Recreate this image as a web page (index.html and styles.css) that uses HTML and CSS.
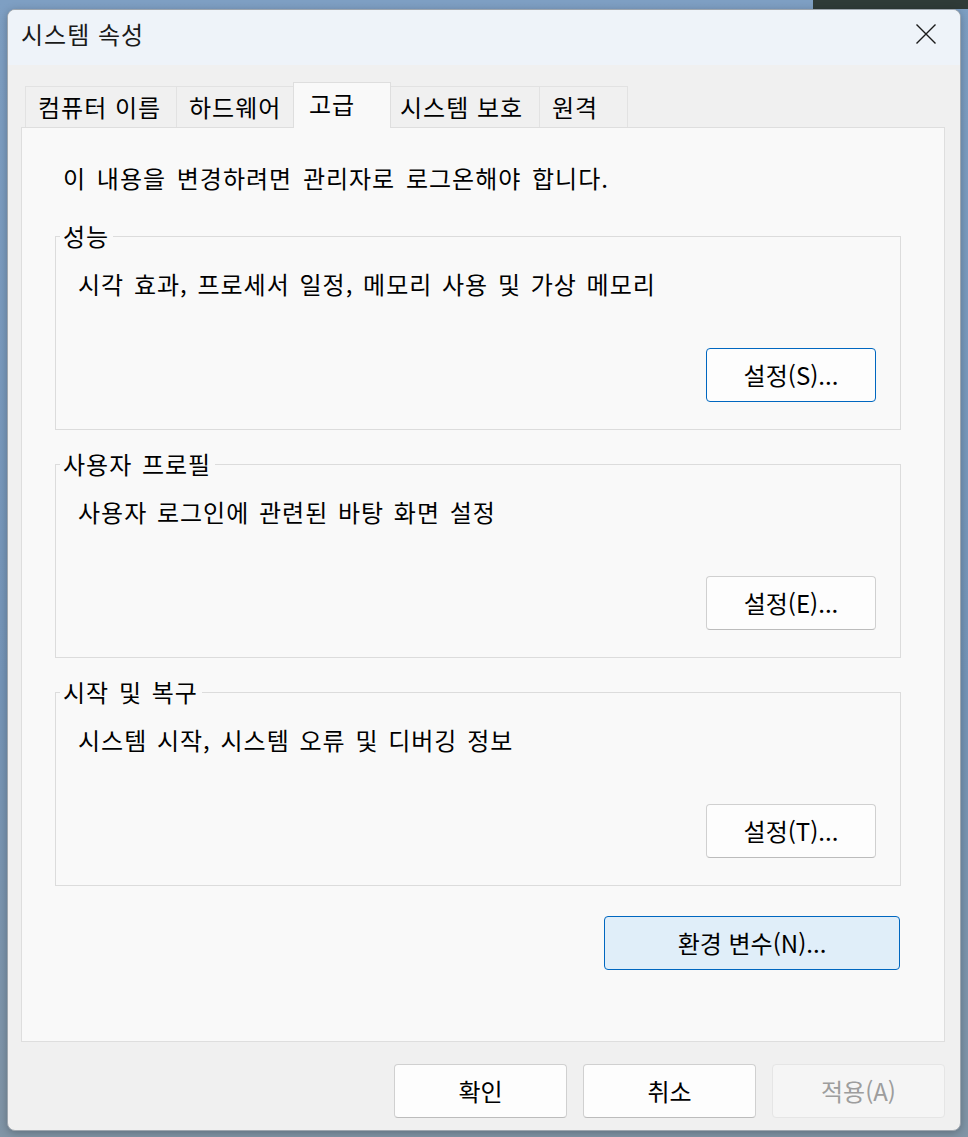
FILE: index.html
```html
<!DOCTYPE html>
<html lang="ko">
<head>
<meta charset="utf-8">
<title>시스템 속성</title>
<link rel="stylesheet" href="styles.css">
</head>
<body>
<div class="desktop">
  <div class="window">
    <div class="titlebar">
      <span class="title">시스템 속성</span>
      <button class="close" aria-label="닫기">
        <svg width="20" height="20" viewBox="0 0 20 20"><path d="M0.5 0.5 L19.5 19.5 M19.5 0.5 L0.5 19.5" stroke="#1a1a1a" stroke-width="1.4" fill="none"/></svg>
      </button>
    </div>
    <div class="content">
      <div class="tabs">
        <div class="tab tab-name">컴퓨터 이름</div>
        <div class="tab tab-hw">하드웨어</div>
        <div class="tab tab-adv is-selected">고급</div>
        <div class="tab tab-prot">시스템 보호</div>
        <div class="tab tab-remote">원격</div>
      </div>
      <div class="panel">
        <p class="intro">이 내용을 변경하려면 관리자로 로그온해야 합니다.</p>
        <fieldset class="group">
          <legend>성능</legend>
          <p class="desc">시각 효과, 프로세서 일정, 메모리 사용 및 가상 메모리</p>
          <div class="group-actions"><button class="btn btn-focus">설정(S)...</button></div>
        </fieldset>
        <fieldset class="group">
          <legend>사용자 프로필</legend>
          <p class="desc">사용자 로그인에 관련된 바탕 화면 설정</p>
          <div class="group-actions"><button class="btn">설정(E)...</button></div>
        </fieldset>
        <fieldset class="group">
          <legend>시작 및 복구</legend>
          <p class="desc">시스템 시작, 시스템 오류 및 디버깅 정보</p>
          <div class="group-actions"><button class="btn">설정(T)...</button></div>
        </fieldset>
        <div class="env-row"><button class="btn btn-default btn-wide">환경 변수(N)...</button></div>
      </div>
      <div class="footer">
        <button class="btn btn-foot">확인</button>
        <button class="btn btn-foot">취소</button>
        <button class="btn btn-foot btn-disabled">적용(A)</button>
      </div>
    </div>
  </div>
</div>
</body>
</html>
```

FILE: styles.css
```css
* { box-sizing: border-box; }

html, body {
  margin: 0;
  padding: 0;
}

body {
  width: 968px;
  height: 1137px;
  overflow: hidden;
  font-family: "Noto Sans CJK KR", "Noto Sans", sans-serif;
  font-size: 24px;
  letter-spacing: 1px;
  color: #000;
  background:
    linear-gradient(90deg, transparent 84%, #2f3b38 84%) top left / 100% 9px no-repeat,
    linear-gradient(180deg, #7e9fc3 0%, #7595b8 60%, #8195a6 100%);
}

.desktop {
  padding: 9px 0 0 7px;
}

.window {
  width: 954px;
  height: 1122px;
  border: 1px solid #9ea6ae;
  border-radius: 8px;
  background: #f0f0f0;
  overflow: hidden;
  display: flex;
  flex-direction: column;
  box-shadow: 0 2px 8px rgba(0, 0, 0, 0.25);
}

.titlebar {
  height: 55px;
  flex: none;
  background: #eef3f9;
  display: flex;
  align-items: center;
  justify-content: space-between;
  padding: 0 0 7px 13px;
}

.title {
  font-size: 24px;
  line-height: 32px;
  color: #1a1a1a;
}

.close {
  width: 66px;
  height: 40px;
  border: 0;
  background: transparent;
  padding: 0;
  display: flex;
  align-items: center;
  justify-content: center;
  margin-right: 1px;
}

.content {
  flex: 1;
  display: flex;
  flex-direction: column;
  padding: 17px 15px 12px 13px;
}

.tabs {
  display: flex;
  align-items: flex-end;
  height: 45px;
  padding-left: 4px;
  flex: none;
}

.tab {
  height: 41px;
  border: 1px solid #e2e2e2;
  border-bottom: 0;
  background: #f0f0f0;
  margin-left: -1px;
  padding-left: 12px;
  line-height: 40px;
  white-space: nowrap;
}

.tab:first-child { margin-left: 0; }

.tab-name { width: 152px; }
.tab-hw { width: 118px; }
.tab-adv { width: 98px; }
.tab-prot { width: 150px; padding-left: 9px; }
.tab-remote { width: 89px; }

.tab.is-selected {
  height: 46px;
  margin-bottom: -1px;
  background: #f9f9f9;
  border-color: #dedede;
  position: relative;
  z-index: 1;
  padding-left: 15px;
  line-height: 42px;
}

.panel {
  flex: 1;
  background: #f9f9f9;
  border: 1px solid #dedede;
  padding: 34px 0 0 0;
  display: flex;
  flex-direction: column;
}

.intro {
  margin: 0 0 26px 41px;
  line-height: 32px;
  word-spacing: 3px;
}

.group {
  margin: 0 43px 18px 33px;
  padding: 0 0 27px 0;
  border: 1px solid #dcdcdc;
  min-width: 0;
}

.group legend {
  margin-left: 4px;
  padding: 0 4px 0 3px;
  line-height: 32px;
  word-spacing: 2px;
}

.desc {
  margin: 16px 0 0 22px;
  line-height: 32px;
  word-spacing: 2px;
}

.group-actions {
  display: flex;
  justify-content: flex-end;
  margin-top: 48px;
  padding-right: 24px;
}

.btn {
  width: 170px;
  height: 54px;
  border: 1px solid #d0d0d0;
  border-bottom-color: #bcbcbc;
  border-radius: 4px;
  background: #fdfdfd;
  font-family: inherit;
  font-size: 24px;
  letter-spacing: 0;
  color: #000;
  padding: 0;
  display: flex;
  align-items: center;
  justify-content: center;
  line-height: 1;
}

.btn-focus {
  border: 1px solid #0067c0;
}

.btn-default {
  background: #e0eef9;
  border: 1px solid #0067c0;
}

.btn-wide {
  width: 296px;
}

.env-row {
  display: flex;
  justify-content: flex-end;
  margin: 12px 44px 0 0;
}

.footer {
  flex: none;
  display: flex;
  justify-content: flex-end;
  gap: 16px;
  margin-top: 22px;
}

.btn-foot {
  width: 173px;
}

.btn-disabled {
  background: #f5f5f5;
  border: 1px solid #e5e5e5;
  color: #9d9d9d;
}
```
